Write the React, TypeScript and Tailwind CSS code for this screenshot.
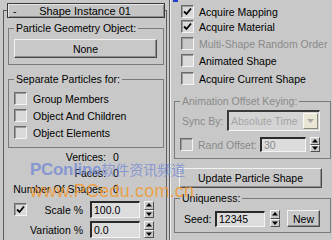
import type { ReactNode } from 'react';

function Check({ checked, disabled }: { checked?: boolean; disabled?: boolean }) {
  return (
    <span
      className={`flex h-[13px] w-[13px] shrink-0 items-center justify-center border-t border-l border-b border-r border-t-[#6a6a6a] border-l-[#6a6a6a] border-b-[#f2f2f2] border-r-[#f2f2f2] ${
        disabled ? 'bg-[#c8c8c8]' : 'bg-[#dadada]'
      } shadow-[inset_1px_1px_0_#9a9a9a]`}
    >
      {checked && (
        <svg width="9" height="9" viewBox="0 0 9 9">
          <polyline points="1,4.5 3.5,7 8,1.5" fill="none" stroke="#000" strokeWidth="1.8" />
        </svg>
      )}
    </span>
  );
}

function Spinner({ h }: { h: string }) {
  return (
    <div className={`flex w-[10px] flex-col ${h}`}>
      {[0, 1].map((i) => (
        <div
          key={i}
          className="flex flex-1 items-center justify-center border border-t-[#f4f4f4] border-l-[#f4f4f4] border-b-[#505050] border-r-[#505050] bg-[#c8c8c8]"
        >
          <svg width="6" height="4" viewBox="0 0 6 4">
            <polygon points={i === 0 ? '3,0 6,3.5 0,3.5' : '0,0.5 6,0.5 3,4'} fill="#000" />
          </svg>
        </div>
      ))}
    </div>
  );
}

function Field({ value, w, h, disabled }: { value: string; w: string; h: string; disabled?: boolean }) {
  return (
    <div
      className={`flex items-center border-t-2 border-l-2 border-b border-r border-t-[#2a2a2a] border-l-[#2a2a2a] border-b-[#f4f4f4] border-r-[#f4f4f4] pl-[2px] ${w} ${h} ${
        disabled ? 'bg-[#dcdcdc] text-[#8a8a8a]' : 'bg-[#dcdcdc] text-black'
      }`}
    >
      {value}
    </div>
  );
}

function Button({ children, className }: { children: ReactNode; className: string }) {
  return (
    <div
      className={`flex items-center justify-center border border-t-[#f2f2f2] border-l-[#f2f2f2] border-b-[#4a4a4a] border-r-[#4a4a4a] bg-[#c8c8c8] shadow-[inset_-1px_-1px_0_#8e8e8e] ${className}`}
    >
      {children}
    </div>
  );
}

function Group({ label, className, children, disabled }: { label: string; className: string; children: ReactNode; disabled?: boolean }) {
  return (
    <fieldset className={`border border-[#7a7a7a] ${className}`}>
      <legend className={`ml-[5px] px-[2px] leading-[12px] ${disabled ? 'text-[#8a8a8a]' : ''}`}>{label}</legend>
      {children}
    </fieldset>
  );
}

export default function App() {
  const rightChecks = [
    { label: 'Acquire Mapping', checked: true, h: 'h-[18px]', pt: 'pt-[3px]' },
    { label: 'Acquire Material', checked: true, h: 'h-[17px]', pt: '' },
    { label: 'Multi-Shape Random Order', disabled: true, h: 'h-[17px]', pt: '' },
    { label: 'Animated Shape', h: 'h-[18px]', pt: '' },
    { label: 'Acquire Current Shape', h: 'h-[17px]', pt: '' },
  ];

  return (
    <div className="relative flex h-[240px] w-[332px] overflow-hidden bg-[#c8c8c8] font-['Liberation_Sans',Arial,sans-serif] text-[10.5px] leading-[12px] text-black">
      {/* left rollout */}
      <div className="w-[169px] shrink-0">
        <div className="ml-[3px] mt-[10px] h-[240px] w-[164px] border-l border-t border-r border-[#5c5c5c]">
          <div className="-mt-[8px] ml-[3px] flex h-[15px] w-[158px] items-center border border-[#3a3a3a] bg-[#c4c4c4] shadow-[inset_1px_1px_0_#e6e6e6,inset_-1px_-1px_0_#8c8c8c]">
            <span className="w-[26px] pl-[5px]">-</span>
            <span className="flex-1 pr-[28px] text-center text-[11px]">Shape Instance 01</span>
          </div>

          <Group label="Particle Geometry Object:" className="ml-[4px] mt-[4px] w-[156px] pb-[6px]">
            <Button className="ml-[5px] mt-[5px] h-[19px] w-[143px]">None</Button>
          </Group>

          <Group label="Separate Particles for:" className="ml-[4px] mt-[8px] w-[156px] pb-[6px]">
            <div className="mt-[5px] pl-[5px]">
              {['Group Members', 'Object And Children', 'Object Elements'].map((t) => (
                <div key={t} className="flex h-[17px] items-center">
                  <Check />
                  <span className="ml-[6px]">{t}</span>
                </div>
              ))}
            </div>
          </Group>

          <div className="mt-[1px]">
            {[
              ['Vertices:', '0'],
              ['Faces:', '0'],
              ['Number Of Shapes:', '0'],
            ].map(([l, v]) => (
              <div key={l} className="flex h-[16px] items-center">
                <span className="w-[102px] text-right">{l}</span>
                <span className="ml-[7px]">{v}</span>
              </div>
            ))}
          </div>

          <div className="mt-[3px] flex h-[19px] items-center">
            <div className="flex w-[79px] items-center pl-[10px]">
              <Check checked />
              <span className="flex-1 text-right">Scale %</span>
            </div>
            <div className="ml-[7px]">
              <Field value="100.0" w="w-[50px]" h="h-[17px]" />
            </div>
            <div className="ml-[4px]">
              <Spinner h="h-[17px]" />
            </div>
          </div>
          <div className="mt-[1px] flex h-[19px] items-center">
            <span className="w-[79px] text-right">Variation %</span>
            <div className="ml-[7px]">
              <Field value="0.0" w="w-[50px]" h="h-[17px]" />
            </div>
            <div className="ml-[4px]">
              <Spinner h="h-[17px]" />
            </div>
          </div>
        </div>
      </div>

      {/* right rollout */}
      <div className="flex-1 border-l border-[#5c5c5c]">
        <div className="h-full border-l border-[#f0f0f0]">
          {rightChecks.map((c) => (
            <div key={c.label} className={`flex items-start pl-[10px] ${c.h} ${c.pt}`}>
              <div className="mt-[2px] flex items-center">
                <Check checked={c.checked} disabled={c.disabled} />
                <span className={`ml-[5px] ${c.disabled ? 'text-[#8a8a8a]' : ''}`}>{c.label}</span>
              </div>
            </div>
          ))}

          <Group label="Animation Offset Keying:" disabled className="ml-[3px] mt-[8px] w-[157px] pb-[5px]">
            <div className="mt-[3px] flex h-[21px] items-center pl-[7px]">
              <span className="w-[45px] text-[#8a8a8a]">Sync By:</span>
              <div className="flex h-[21px] w-[93px] items-center border-t-2 border-l-2 border-b border-r border-t-[#3a3a3a] border-l-[#3a3a3a] border-b-[#f4f4f4] border-r-[#f4f4f4] bg-[#d4d4d4] pl-[2px] text-[#a4a4a4]">
                <span className="flex-1">Absolute Time</span>
                <div className="mr-[1px] flex h-[16px] w-[15px] items-center justify-center border border-t-[#fbfaf3] border-l-[#fbfaf3] border-b-[#8a887c] border-r-[#8a887c] bg-[#e9e6d6]">
                  <svg width="7" height="4" viewBox="0 0 7 4">
                    <polygon points="0,0 7,0 3.5,4" fill="#a8a8a8" />
                  </svg>
                </div>
              </div>
            </div>
            <div className="mt-[5px] flex h-[17px] items-center pl-[5px]">
              <Check disabled />
              <span className="ml-[5px] w-[62px] text-[#8a8a8a]">Rand Offset:</span>
              <Field value="30" w="w-[46px]" h="h-[15px]" disabled />
              <div className="ml-[4px]">
                <Spinner h="h-[15px]" />
              </div>
            </div>
          </Group>

          <Button className="ml-[8px] mt-[9px] h-[20px] w-[143px]">Update Particle Shape</Button>

          <Group label="Uniqueness:" className="ml-[3px] mt-[4px] w-[157px] pb-[4px]">
            <div className="mt-[5px] flex h-[19px] items-center pl-[9px]">
              <span className="w-[31px]">Seed:</span>
              <Field value="12345" w="w-[50px]" h="h-[16px]" />
              <div className="ml-[5px]">
                <Spinner h="h-[17px]" />
              </div>
              <Button className="ml-[7px] h-[17px] w-[33px]">New</Button>
            </div>
          </Group>
        </div>
      </div>

      {/* watermark */}
      <div className="pointer-events-none absolute left-[30px] top-[161px] font-['Liberation_Sans','Noto_Sans_CJK_SC',sans-serif]">
        <div className="flex items-end whitespace-nowrap leading-[18px] text-[#6f86d4]/75">
          <span className="text-[17px] font-bold tracking-[-0.3px]">PConline</span>
          <span className="text-[14px]">软件资讯频道</span>
        </div>
        <div className="mt-[3px] whitespace-nowrap text-[18px] leading-[18px] tracking-[0.2px] text-[#f3992f]/85">
          www.PCedu.com.cn
        </div>
      </div>
      <span className="absolute left-[173px] top-0 h-[2px] w-[5px] bg-[#2040c8]" />
    </div>
  );
}
